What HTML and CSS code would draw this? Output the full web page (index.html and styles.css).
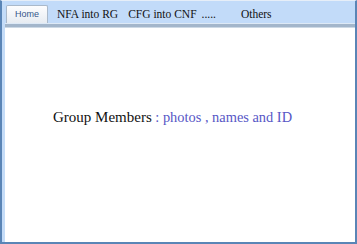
FILE: index.html
```html
<!DOCTYPE html>
<html>
<head>
<meta charset="utf-8">
<link rel="stylesheet" href="styles.css">
</head>
<body>
<div class="frame">
  <div class="inner">
    <div class="tabbar">
      <div class="tab active">Home</div>
      <div class="tab t1">NFA into RG</div>
      <div class="tab t2">CFG into CNF</div>
      <div class="tab t3">.....</div>
      <div class="tab t4">Others</div>
    </div>
    <div class="rule"></div>
    <div class="content">
      <p class="heading">Group Members<span class="sub"> : photos , names and ID</span></p>
    </div>
  </div>
</div>
</body>
</html>
```
FILE: styles.css
```css
html, body {
  margin: 0;
  padding: 0;
  background: #ffffff;
}
.frame {
  width: 357px;
  height: 244px;
  box-sizing: border-box;
  border: 2px solid #5a85b6;
  border-top: 1px solid #e6eef8;
  display: flex;
}
.inner {
  flex: 1;
  display: flex;
  flex-direction: column;
  border-left: 3px solid #c4dcf8;
}
.tabbar {
  height: 22px;
  background: #c2dbf9;
  display: flex;
  align-items: flex-end;
  padding-left: 1px;
  font-family: "Liberation Serif", serif;
  font-size: 11.5px;
  color: #111;
}
.tab {
  height: 18px;
  line-height: 19px;
  box-sizing: border-box;
}
.tab.active {
  width: 42px;
  text-align: center;
  font-family: "Liberation Sans", sans-serif;
  font-size: 9px;
  color: #35568a;
  background: linear-gradient(#fdfdfe, #e7ecf2);
  border: 1px solid #aab9ca;
  border-bottom: none;
  border-radius: 2px 2px 0 0;
  line-height: 17px;
}
.t1 { margin-left: 9px; }
.t2 { margin-left: 10px; }
.t3 { margin-left: 5px; }
.t4 { margin-left: 25px; }
.rule {
  height: 5px;
  box-sizing: border-box;
  border-top: 1px solid #dde9f6;
  background: #a3b6cb;
  border-bottom: 1px solid #cdd9e5;
}
.content {
  flex: 1;
  background: #ffffff;
  padding-left: 48px;
  padding-top: 80px;
}
.heading {
  margin: 0;
  font-family: "Liberation Serif", serif;
  font-size: 15px;
  color: #111;
  line-height: 18px;
}
.sub {
  font-size: 14.4px;
  color: #5757c6;
}
```
